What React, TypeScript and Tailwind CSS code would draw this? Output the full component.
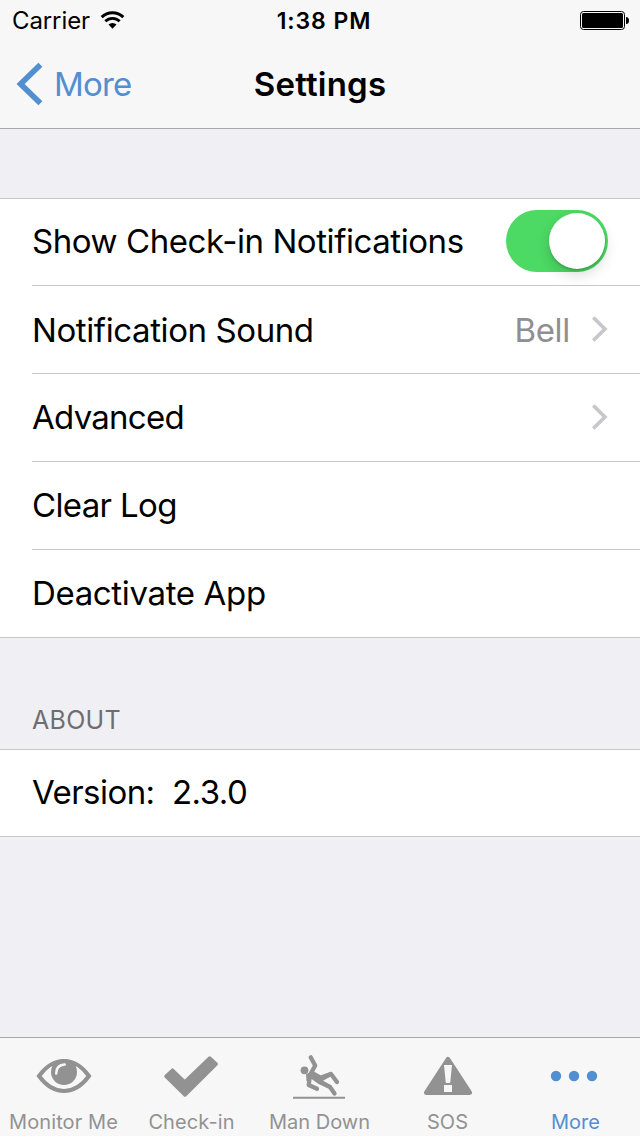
import type { ReactNode } from 'react';

const ink = '#929292';

function Chevron() {
  return (
    <svg className="ml-[21px] block h-[28px] w-[17px]" viewBox="0 0 17 28" fill="none">
      <path d="M2.3 2.5 13.9 14 2.3 25.5" stroke="#c7c7cc" strokeWidth="3.8" />
    </svg>
  );
}

function Row({ label, spacing, children, last = false }: { label: string; spacing: string; children?: ReactNode; last?: boolean }) {
  return (
    <div className={`flex items-center pr-[32px] pb-px ${last ? 'h-[87px] pl-[32px]' : 'ml-[32px] h-[88px] border-b border-[#c8c7cc]'}`}>
      <div className={`grow whitespace-pre text-[33px] leading-[40px] ${spacing}`}>{label}</div>
      {children}
    </div>
  );
}

function Tab({ label, spacing, active = false, children, box }: { label: string; spacing: string; active?: boolean; children: ReactNode; box: string }) {
  return (
    <div className={`flex h-full w-[128px] flex-col items-center ${active ? 'text-[#528fd0]' : 'text-[#929292]'}`}>
      <svg className="block h-[62px] w-[128px] shrink-0" viewBox={box}>{children}</svg>
      <span className={`mt-[10px] mr-px whitespace-nowrap text-[20px] leading-[24px] ${spacing}`}>{label}</span>
    </div>
  );
}

export default function App() {
  return (
    <div className="flex h-[1136px] w-[640px] flex-col overflow-hidden bg-[#efeff4] font-['Inter',sans-serif] text-black">
      <header className="h-[129px] shrink-0 border-b border-[#a7a7ac] bg-[#f7f7f8]">
        <div className="grid h-[40px] grid-cols-[1fr_auto_1fr] items-start">
          <div className="flex items-start pl-[12px]">
            <span className="pt-px text-[24px] leading-[40px] tracking-[-0.1px]">Carrier</span>
            <svg className="ml-[10px] block h-[40px] w-[26px]" viewBox="100 0 26 40" fill="none" stroke="#000">
              <path d="M101.7 17.2a15.5 15.5 0 0 1 21.6 0" strokeWidth="3" />
              <path d="M105.3 21.3a10.2 10.2 0 0 1 14.4 0" strokeWidth="2.8" />
              <path d="m112.5 28.8-4-4.2a5.8 5.8 0 0 1 8 0z" fill="#000" stroke="none" />
            </svg>
          </div>
          <div className="whitespace-nowrap pt-px pl-[8px] text-center text-[23px] font-semibold leading-[40px] tracking-[0.9px]">1:38 PM</div>
          <svg className="block h-[40px] w-[64px] justify-self-end" viewBox="576 0 64 40">
            <rect x="580.5" y="11.5" width="44" height="18" rx="3" fill="none" stroke="#000" />
            <rect x="582" y="13" width="41" height="15" rx="1.5" />
            <path d="M626 17q3 0 3 3.5t-3 3.5z" />
          </svg>
        </div>
        <div className="grid h-[88px] grid-cols-[1fr_auto_1fr] items-center">
          <div className="flex items-center pl-[16px] text-[#528fd0]">
            <svg className="block h-[44px] w-[28px]" viewBox="0 0 28 44" fill="none">
              <path d="M24.4 2.7 4.6 22l19.8 19.3" stroke="currentColor" strokeWidth="5.7" />
            </svg>
            <span className="ml-[10px] text-[33px] leading-[40px] tracking-[-0.8px]">More</span>
          </div>
          <h1 className="text-[33px] font-semibold leading-[40px] tracking-[0.2px]">Settings</h1>
          <div />
        </div>
      </header>

      <main className="grow">
        <section className="mt-[69px] border-y border-[#c8c7cc] bg-white">
          <div className="-mt-px">
            <Row label="Show Check-in Notifications" spacing="tracking-[-0.43px]">
              <div className="flex h-[62px] w-[102px] items-center justify-end rounded-full bg-[#4cd964] pr-[3px]">
                <div className="h-[56px] w-[56px] rounded-full bg-white shadow-[0_6px_14px_rgba(0,0,0,0.15),0_2px_2px_rgba(0,0,0,0.15)]" />
              </div>
            </Row>
            <Row label="Notification Sound" spacing="pt-[2px] tracking-[-0.4px]">
              <span className="pt-[2px] text-[33px] leading-[40px] tracking-[-0.3px] text-[#8e8e93]">Bell</span>
              <Chevron />
            </Row>
            <Row label="Advanced" spacing="tracking-[-0.75px]"><Chevron /></Row>
            <Row label="Clear Log" spacing="tracking-[-0.65px]" />
            <Row label="Deactivate App" spacing="tracking-[-0.35px]" last />
          </div>
        </section>
        <h2 className="flex h-[111px] items-end pb-[13px] pl-[32px] text-[25px] font-normal leading-[32px] tracking-[0.3px] text-[#6d6d72]">ABOUT</h2>
        <section className="h-[88px] border-y border-[#c8c7cc] bg-white">
          <div className="-mt-px"><Row label="Version:  2.3.0" spacing="tracking-[-0.55px]" last /></div>
        </section>
      </main>

      <nav className="flex h-[99px] shrink-0 border-t border-[#a7a7ac] bg-[#f7f7f8]">
        <Tab label="Monitor Me" spacing="tracking-[0.1px]" box="0 1038 128 62">
          <path d="M39 1076Q50 1061 64 1061T89 1076Q78 1091 64 1091T39 1076Z" fill="none" stroke={ink} strokeWidth="4" />
          <circle cx="64" cy="1072" r="13" fill={ink} />
          <path d="M56.2 1073.5q0-8.5 8.5-9" fill="none" stroke="#f7f7f8" strokeWidth="2.5" strokeLinecap="round" />
        </Tab>
        <Tab label="Check-in" spacing="tracking-[0.1px]" box="128 1038 128 62">
          <path d="m166 1076.2 6.5-6 12.2 11.8 25-24 6.5 6-31.2 31z" fill={ink} stroke={ink} strokeWidth="3.5" strokeLinejoin="round" />
        </Tab>
        <Tab label="Man Down" spacing="tracking-[0px]" box="256 1038 128 62">
          <circle cx="304.5" cy="1070.3" r="3.9" fill={ink} />
          <g fill="none" stroke={ink} strokeLinecap="round" strokeLinejoin="round" strokeWidth="4.3">
            <path d="m310.7 1057.3 4.5 8.2-5.2 9.5-1.3 10 8.3 3.8" />
            <path d="m320 1078 11-4 6 8" />
            <path d="m319 1081.5 11 5.5 4.5 6.5" />
          </g>
          <path d="m313 1071 8 4.5 10-3.8 1 4-9 5 8.5 5-2 3-12-5.5-7-5-4 3-.5-7z" fill={ink} />
          <path d="M293 1097.8h52" stroke={ink} strokeWidth="2" />
        </Tab>
        <Tab label="SOS" spacing="tracking-[0px]" box="384 1038 128 62">
          <path d="m448 1059.5 21.5 33h-43z" fill={ink} stroke={ink} strokeWidth="5" strokeLinejoin="round" />
          <path d="M444 1065h8l-1.8 18h-4.4zM444 1085h8v7h-8z" fill="#f7f7f8" />
        </Tab>
        <Tab label="More" spacing="tracking-[0px]" box="512 1038 128 62" active>
          <g fill="#528fd0">
            <circle cx="556" cy="1076" r="5.2" />
            <circle cx="574" cy="1076" r="5.2" />
            <circle cx="592" cy="1076" r="5.2" />
          </g>
        </Tab>
      </nav>
    </div>
  );
}
